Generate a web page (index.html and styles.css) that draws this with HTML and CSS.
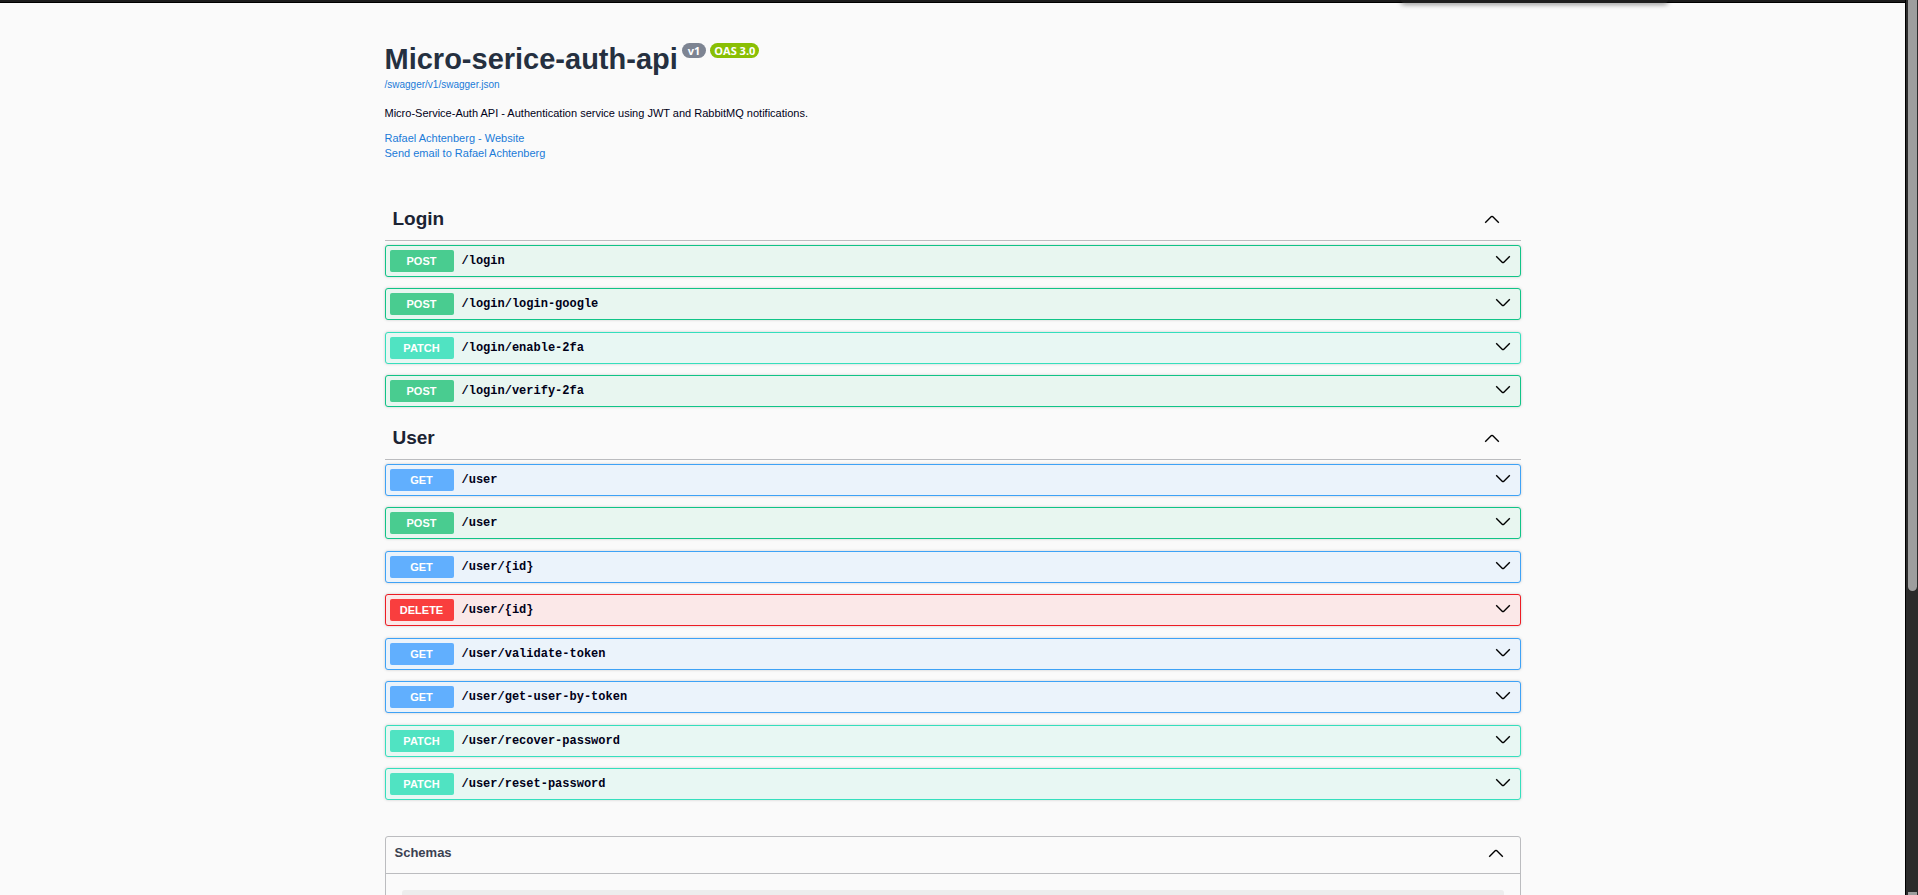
FILE: index.html
```html
<!DOCTYPE html>
<html lang="en">
<head>
<meta charset="utf-8">
<title>Micro-serice-auth-api</title>
<link rel="stylesheet" href="styles.css">
</head>
<body>
<svg class="defs" aria-hidden="true">
  <symbol id="down" viewBox="0 0 16 16"><path d="M1.2 4.3 L7.4 10.4 Q8 10.9 8.6 10.4 L14.8 4.3"/></symbol>
  <symbol id="up" viewBox="0 0 16 16"><path d="M1.2 11.7 L7.4 5.6 Q8 5.1 8.6 5.6 L14.8 11.7"/></symbol>
</svg>
<div class="page">
  <div class="topbar"><div class="popup"></div></div>
  <main class="wrapper">
    <header class="info">
      <div class="title-row">
        <h1>Micro-serice-auth-api</h1>
        <span class="badge version">v1</span>
        <span class="badge oas">OAS 3.0</span>
      </div>
      <a class="spec" href="#">/swagger/v1/swagger.json</a>
      <p>Micro-Service-Auth API - Authentication service using JWT and RabbitMQ notifications.</p>
      <a class="contact" href="#">Rafael Achtenberg - Website</a>
      <a class="contact" href="#">Send email to Rafael Achtenberg</a>
    </header>

    <section class="group">
      <h2><button type="button" class="tag" aria-expanded="true">Login<svg class="arrow"><use href="#up"/></svg></button></h2>
      <div class="ops">
        <button type="button" class="op post"><span class="method">POST</span><span class="path">/login</span><svg class="arrow"><use href="#down"/></svg></button>
        <button type="button" class="op post"><span class="method">POST</span><span class="path">/login/login-google</span><svg class="arrow"><use href="#down"/></svg></button>
        <button type="button" class="op patch"><span class="method">PATCH</span><span class="path">/login/enable-2fa</span><svg class="arrow"><use href="#down"/></svg></button>
        <button type="button" class="op post"><span class="method">POST</span><span class="path">/login/verify-2fa</span><svg class="arrow"><use href="#down"/></svg></button>
      </div>
    </section>

    <section class="group">
      <h2><button type="button" class="tag" aria-expanded="true">User<svg class="arrow"><use href="#up"/></svg></button></h2>
      <div class="ops">
        <button type="button" class="op get"><span class="method">GET</span><span class="path">/user</span><svg class="arrow"><use href="#down"/></svg></button>
        <button type="button" class="op post"><span class="method">POST</span><span class="path">/user</span><svg class="arrow"><use href="#down"/></svg></button>
        <button type="button" class="op get"><span class="method">GET</span><span class="path">/user/{id}</span><svg class="arrow"><use href="#down"/></svg></button>
        <button type="button" class="op delete"><span class="method">DELETE</span><span class="path">/user/{id}</span><svg class="arrow"><use href="#down"/></svg></button>
        <button type="button" class="op get"><span class="method">GET</span><span class="path">/user/validate-token</span><svg class="arrow"><use href="#down"/></svg></button>
        <button type="button" class="op get"><span class="method">GET</span><span class="path">/user/get-user-by-token</span><svg class="arrow"><use href="#down"/></svg></button>
        <button type="button" class="op patch"><span class="method">PATCH</span><span class="path">/user/recover-password</span><svg class="arrow"><use href="#down"/></svg></button>
        <button type="button" class="op patch"><span class="method">PATCH</span><span class="path">/user/reset-password</span><svg class="arrow"><use href="#down"/></svg></button>
      </div>
    </section>

    <section class="schemas">
      <h2><button type="button" class="schemas-toggle" aria-expanded="true">Schemas<svg class="arrow"><use href="#up"/></svg></button></h2>
      <div class="models"><div class="model"></div></div>
    </section>
  </main>
</div>
<div class="scrollbar"><div class="thumb"></div><div class="stub"></div></div>
</body>
</html>
```
FILE: styles.css
```css
* { box-sizing: border-box; }

body {
  display: flex;
  height: 100vh;
  margin: 0;
  overflow: hidden;
  background: #fafafa;
  color: #1b2333;
  font-family: "Liberation Sans", Arial, sans-serif;
}

.defs { position: absolute; width: 0; height: 0; }
h1, h2, p { margin: 0; }
a { color: #1b7bd8; text-decoration: none; }
button { font-family: inherit; color: inherit; text-align: left; cursor: pointer; }

.page { flex: 1; overflow: hidden; }

.topbar {
  position: relative;
  height: 3px;
  background: #1c1c1c;
  border-bottom: 1px solid #000;
}
.popup {
  position: absolute;
  top: 0;
  right: 237px;
  width: 267px;
  height: 3px;
  background: #1f1f1f;
  border-radius: 0 0 4px 4px;
  box-shadow: 0 1px 5px rgba(0, 0, 0, .6);
}

.wrapper { max-width: 1168px; margin: 0 auto; padding: 0 16px; }

.info { display: flex; flex-direction: column; align-items: flex-start; padding: 40px 0 37px; }
.title-row { display: flex; align-items: flex-start; gap: 4px; }
h1 { font-size: 29px; line-height: 33px; color: #253040; }
.badge {
  height: 15px;
  padding: 0 6px;
  border-radius: 8px;
  color: #fff;
  font: bold 11px/15px "Open Sans", "DejaVu Sans", sans-serif;
}
.version { background: #7d8492; }
.oas { background: #89bf04; padding: 0 4px; }
.spec { margin-top: 3px; font-size: 10px; line-height: 12px; }
.info p { margin: 15px 0 11px; font-size: 11px; line-height: 14px; color: #000018; }
.contact { font-size: 11px; line-height: 15px; }

.tag {
  display: flex;
  align-items: center;
  justify-content: space-between;
  width: 100%;
  padding: 8px 21px 8px 8px;
  border: 0;
  border-bottom: 1px solid #bbbcbf;
  background: none;
  font-size: 19px;
  font-weight: bold;
  line-height: 26px;
}
.arrow { width: 16px; height: 16px; fill: none; stroke: #000; stroke-width: 1.4; }

.ops { padding: 4px 0 10px; }
.op {
  display: flex;
  align-items: center;
  width: 100%;
  margin-bottom: 12px;
  padding: 4px;
  border: 1px solid;
  border-radius: 3px;
  box-shadow: 0 0 3px rgba(0, 0, 0, .19);
}
.op:nth-child(odd) { margin-bottom: 11px; }
.op:last-child { margin-bottom: 0; }
.op .arrow { margin: 0 5px 2px auto; }
.method {
  width: 64px;
  border-radius: 2px;
  color: #fff;
  font-size: 11px;
  font-weight: bold;
  line-height: 22px;
  text-align: center;
}
.path {
  padding-left: 8px;
  color: #000018;
  font: bold 12px/16px "Liberation Mono", monospace;
}

.post { background: #e8f6f0; border-color: #10c487; }
.post .method { background: #49cc90; }
.patch { background: #e8f7f3; border-color: #35dfbd; }
.patch .method { background: #50e3c2; }
.get { background: #ebf3fb; border-color: #3ea2f6; }
.get .method { background: #61affe; }
.delete { background: #fbe8e8; border-color: #ed1c24; }
.delete .method { background: #f93e3e; }

.schemas { margin-top: 26px; border: 1px solid #bbbcbf; border-radius: 3px; }
.schemas-toggle {
  display: flex;
  align-items: center;
  justify-content: space-between;
  width: 100%;
  padding: 2px 16px 6px 9px;
  border: 0;
  border-bottom: 1px solid #bbbcbf;
  background: none;
  color: #3b4151;
  font-size: 13px;
  font-weight: bold;
  line-height: 28px;
}
.models { padding: 16px; }
.model { height: 32px; border-radius: 3px; background: #ededed; }

.scrollbar {
  display: flex;
  flex-direction: column;
  justify-content: space-between;
  width: 13px;
  padding: 0 1px 0 2px;
  border-left: 1px solid #000;
  background: #2b2b2b;
}
.thumb { height: 66%; border-radius: 0 0 5px 5px; background: #9e9e9e; }
.stub { height: 3px; background: #9e9e9e; }
```
